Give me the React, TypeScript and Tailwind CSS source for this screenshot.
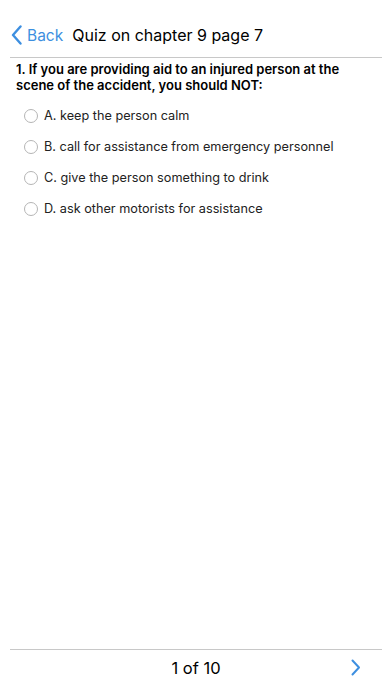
const options = [
  "A. keep the person calm",
  "B. call for assistance from emergency personnel",
  "C. give the person something to drink",
  "D. ask other motorists for assistance",
]

function Radio() {
  return <div className="w-[14px] h-[14px] rounded-full border border-[#b5b5b5] bg-white shrink-0" />
}

export default function App() {
  return (
    <div
      className="w-[392px] h-[696px] bg-white flex flex-col text-black"
      style={{ fontFamily: "Inter, 'Liberation Sans', sans-serif" }}
    >
      <div className="h-[57px] flex items-end pb-[10px] px-[11px]">
        <div className="flex items-center text-[#3d8fe0]">
          <svg width="11" height="20" viewBox="0 0 11 20" fill="none">
            <path d="M9.5 1.5 L2 10 L9.5 18.5" stroke="#3d8fe0" strokeWidth="2.4" strokeLinecap="round" strokeLinejoin="round" />
          </svg>
          <span className="text-[15.5px] ml-[5px]">Back</span>
        </div>
        <span className="text-[16px] ml-[9px]">Quiz on chapter 9 page 7</span>
      </div>
      <div className="mx-[10px] h-px bg-[#c8c8c8]" />
      <div className="px-[16px] pt-[4px] text-[13px] font-semibold leading-[15.5px]">
        1. If you are providing aid to an injured person at the scene of the accident, you should NOT:
      </div>
      <div className="flex flex-col pt-[7px]">
        {options.map((o) => (
          <div key={o} className="h-[31px] flex items-center pl-[24px] gap-[6px]">
            <Radio />
            <span className="text-[12.7px] text-[#222]">{o}</span>
          </div>
        ))}
      </div>
      <div className="flex-1" />
      <div className="mx-[10px] h-px bg-[#c8c8c8]" />
      <div className="h-[36px] relative flex items-center justify-center mb-[10px]">
        <span className="text-[16.5px]">1 of 10</span>
        <svg className="absolute right-[31px] top-[9px]" width="10" height="17" viewBox="0 0 10 17" fill="none">
          <path d="M1.5 1.5 L8 8.5 L1.5 15.5" stroke="#3d8fe0" strokeWidth="2" strokeLinecap="round" strokeLinejoin="round" />
        </svg>
      </div>
    </div>
  )
}
